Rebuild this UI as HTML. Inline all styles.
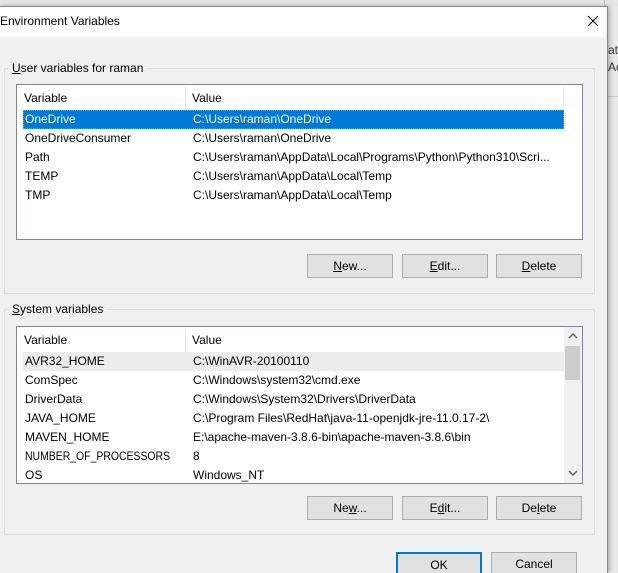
<!DOCTYPE html>
<html><head><style>
html,body{margin:0;width:618px;height:573px;overflow:hidden}
body{background:#e9e9e9;font-family:"Liberation Sans",sans-serif;font-size:12px;color:#000;position:relative}
.a{position:absolute}
.dlg{left:-2px;top:6px;width:608px;height:566px;background:#f0f0f0;border:1px solid #888;border-bottom:none;box-shadow:2px 0 4px rgba(0,0,0,.25)}
.title{left:0;top:7px;width:606px;height:30px;background:#fff}
.grp{border:1px solid #dcdcdc}
.lbl{background:#f0f0f0;padding:0 3px}
.lb{background:#fff;border:1px solid #828790;overflow:hidden}
.row{position:absolute;left:6px;height:19px;line-height:19px;width:541px}
.row span{position:absolute}
.btn{position:absolute;background:#e1e1e1;border:1px solid #adadad;text-align:center;line-height:22px;height:22px}
u{text-decoration:underline}
</style></head><body>
<div class="a" style="left:0;top:0;width:618px;height:6px;background:#e4e4e4"></div>
<div class="a" style="left:604px;top:0;width:1px;height:6px;background:#bbb"></div>
<div class="a" style="left:608px;top:43px;font-size:12px;color:#333">at</div>
<div class="a" style="left:608px;top:60px;font-size:12px;color:#333">Ac</div>
<div class="a" style="left:608px;top:96px;width:10px;height:1px;background:#ccc"></div>
<div class="a dlg"></div>
<div class="a title"></div>
<div class="a" style="left:0;top:14px;font-size:12px">Environment Variables</div>
<svg class="a" style="left:587px;top:15px" width="12" height="12"><path d="M1 1L11 11M11 1L1 11" stroke="#000" stroke-width="1"/></svg>

<div class="a grp" style="left:4px;top:68px;width:589px;height:224px"></div>
<div class="a lbl" style="left:9px;top:61px;font-size:12px"><u>U</u>ser variables for raman</div>
<div class="a lb" style="left:16px;top:84px;width:565px;height:154px">
 <div class="row" style="top:4px;left:0;width:547px"><span style="left:7px">Variable</span><span style="left:175px">Value</span></div>
 <div class="a" style="left:168px;top:2px;width:1px;height:22px;background:#e5e5e5"></div>
 <div class="a" style="left:546px;top:0;width:1px;height:26px;background:#eee"></div>
 <div class="row" style="top:25px;background:#0078d7;color:#fff;outline:1px dotted #e08030;outline-offset:-1px"><span style="left:2px">OneDrive</span><span style="left:170px">C:\Users\raman\OneDrive</span></div>
 <div class="row" style="top:44px"><span style="left:2px">OneDriveConsumer</span><span style="left:170px">C:\Users\raman\OneDrive</span></div>
 <div class="row" style="top:63px"><span style="left:2px">Path</span><span style="left:170px">C:\Users\raman\AppData\Local\Programs\Python\Python310\Scri...</span></div>
 <div class="row" style="top:82px"><span style="left:2px">TEMP</span><span style="left:170px">C:\Users\raman\AppData\Local\Temp</span></div>
 <div class="row" style="top:101px"><span style="left:2px">TMP</span><span style="left:170px">C:\Users\raman\AppData\Local\Temp</span></div>
</div>
<div class="btn" style="left:307px;top:254px;width:84px"><u>N</u>ew...</div>
<div class="btn" style="left:402px;top:254px;width:84px"><u>E</u>dit...</div>
<div class="btn" style="left:496px;top:254px;width:84px"><u>D</u>elete</div>

<div class="a grp" style="left:4px;top:309px;width:589px;height:224px"></div>
<div class="a lbl" style="left:9px;top:302px;font-size:12px"><u>S</u>ystem variables</div>
<div class="a lb" style="left:16px;top:326px;width:565px;height:156px">
 <div class="row" style="top:4px;left:0;width:547px"><span style="left:7px">Variable</span><span style="left:175px">Value</span></div>
 <div class="a" style="left:168px;top:2px;width:1px;height:22px;background:#e5e5e5"></div>
 <div class="row" style="top:25px;background:#ececec"><span style="left:2px">AVR32_HOME</span><span style="left:170px">C:\WinAVR-20100110</span></div>
 <div class="row" style="top:44px"><span style="left:2px">ComSpec</span><span style="left:170px">C:\Windows\system32\cmd.exe</span></div>
 <div class="row" style="top:63px"><span style="left:2px">DriverData</span><span style="left:170px">C:\Windows\System32\Drivers\DriverData</span></div>
 <div class="row" style="top:82px"><span style="left:2px">JAVA_HOME</span><span style="left:170px">C:\Program Files\RedHat\java-11-openjdk-jre-11.0.17-2\</span></div>
 <div class="row" style="top:101px"><span style="left:2px">MAVEN_HOME</span><span style="left:170px">E:\apache-maven-3.8.6-bin\apache-maven-3.8.6\bin</span></div>
 <div class="row" style="top:120px"><span style="left:2px;transform:scaleX(0.87);transform-origin:left">NUMBER_OF_PROCESSORS</span><span style="left:170px">8</span></div>
 <div class="row" style="top:139px"><span style="left:2px">OS</span><span style="left:170px">Windows_NT</span></div>
 <div class="a" style="left:547px;top:0;width:18px;height:156px;background:#f0f0f0"></div>
 <div class="a" style="left:548px;top:19px;width:15px;height:34px;background:#cdcdcd"></div>
 <svg class="a" style="left:551px;top:5px" width="10" height="8"><path d="M1 6L5 2L9 6" stroke="#606060" stroke-width="1.5" fill="none"/></svg>
 <svg class="a" style="left:551px;top:142px" width="10" height="8"><path d="M1 2L5 6L9 2" stroke="#606060" stroke-width="1.5" fill="none"/></svg>
</div>
<div class="btn" style="left:307px;top:496px;width:84px">Ne<u>w</u>...</div>
<div class="btn" style="left:402px;top:496px;width:84px">E<u>d</u>it...</div>
<div class="btn" style="left:496px;top:496px;width:84px">De<u>l</u>ete</div>

<div class="btn" style="left:396px;top:552px;width:82px;border:2px solid #0078d7;line-height:22px">OK</div>
<div class="btn" style="left:491px;top:552px;width:84px">Cancel</div>
</body></html>
